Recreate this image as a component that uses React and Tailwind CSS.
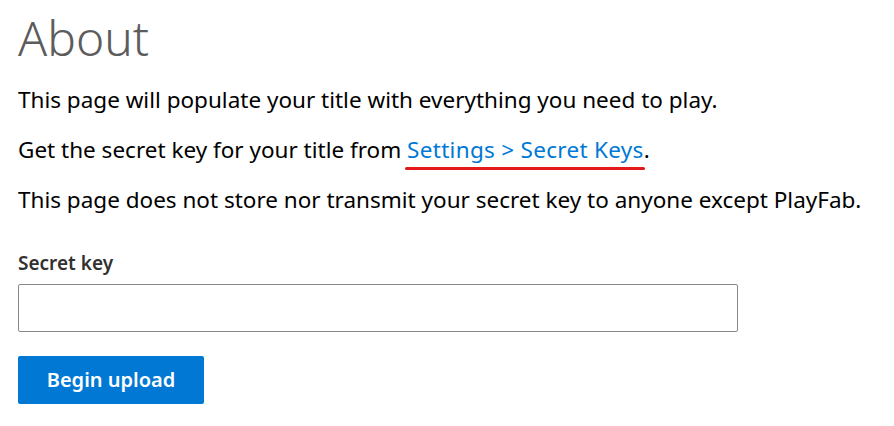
export default function App() {
    return (
        <div className="min-h-screen bg-white px-[18px] pt-[7px] font-['Noto_Sans',sans-serif] text-black">
            <h1 className="text-[48px] font-light leading-[62px] text-[#5c5c5c]">About</h1>

            <p className="mt-[16px] text-[22.5px] leading-[30px]">
                This page will populate your title with everything you need to play.
            </p>
            <p className="mt-[20px] text-[22.5px] leading-[30px]">
                Get the secret key for your title from{" "}
                <span className="relative">
                    <a href="#" className="text-[#0078d4] tracking-[0.3px]">Settings &gt; Secret Keys</a>
                    <span className="absolute -left-[2px] -right-[1px] top-[33px] h-[3px] rounded-full bg-[#e3191c]" />
                </span>
                .
            </p>
            <p className="mt-[20px] text-[22.5px] leading-[30px]">
                This page does not store nor transmit your secret key to anyone except PlayFab.
            </p>

            <div className="mt-[35px]">
                <label className="block text-[19px] font-semibold leading-[26px] text-[#323130]">Secret key</label>
                <input
                    type="text"
                    className="mt-[8px] block h-[48px] w-[720px] rounded-[2px] border border-[#8a8886] px-3 text-[18px] outline-none"
                />
            </div>

            <button className="mt-[24px] h-[48px] w-[186px] rounded-[2px] bg-[#0078d4] text-[20px] font-semibold text-white">
                Begin upload
            </button>
        </div>
    );
}
